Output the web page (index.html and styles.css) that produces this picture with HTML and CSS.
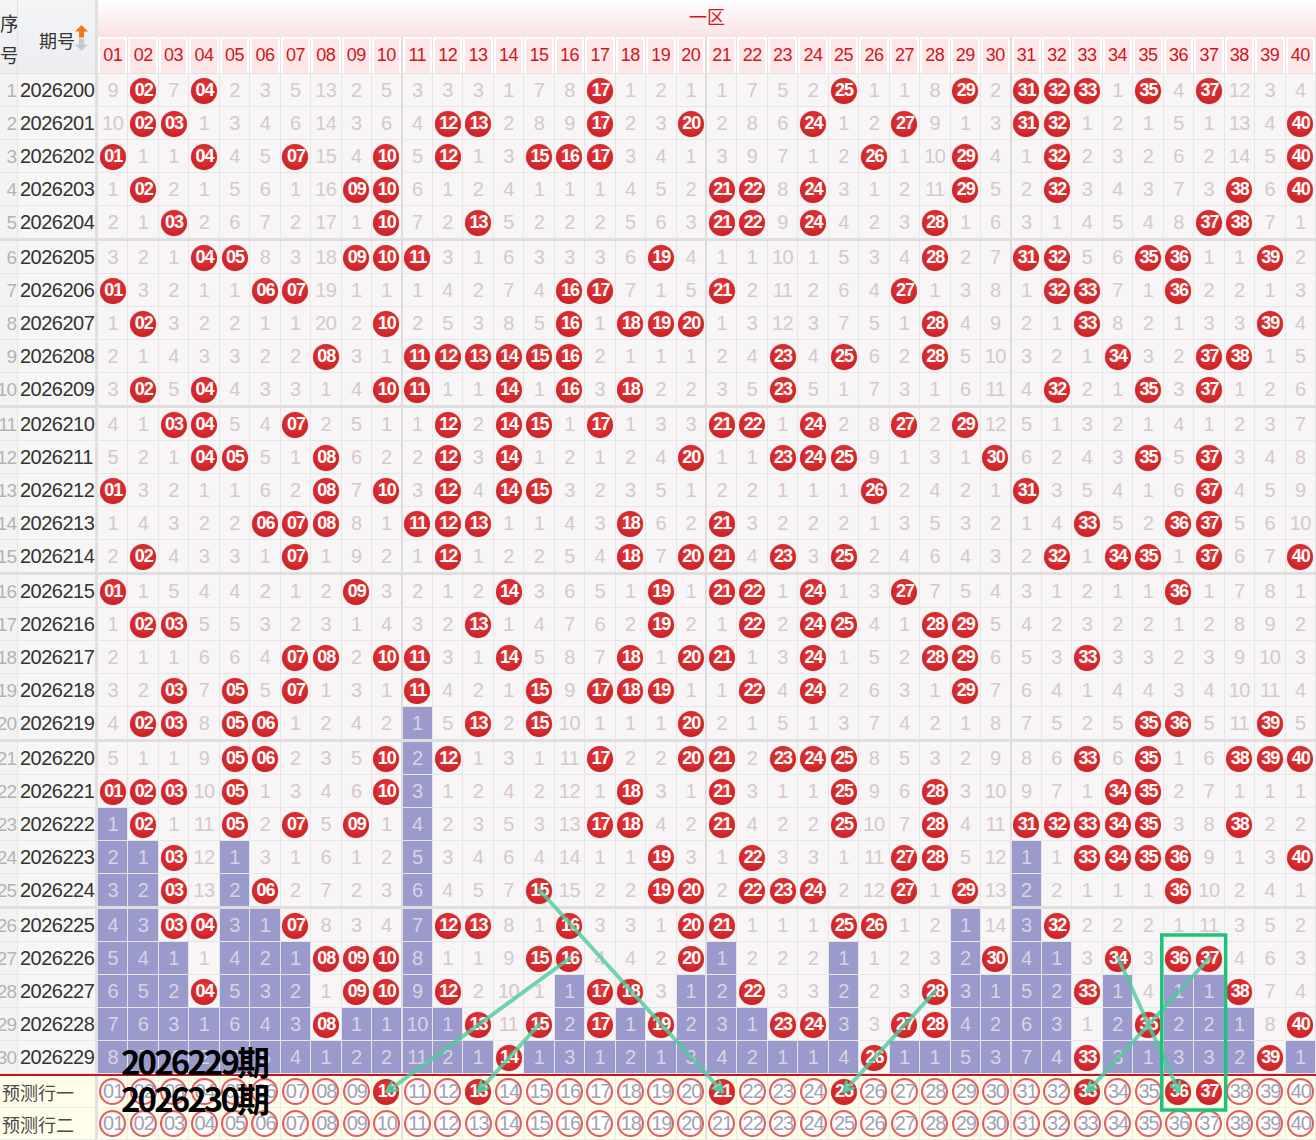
FILE: index.html
```html
<!DOCTYPE html>
<html lang="zh-CN">
<head>
<meta charset="utf-8">
<title>一区走势图</title>
<link rel="stylesheet" href="styles.css">
</head>
<body>
<div class="chart" id="chart">
  <div class="head" id="head">
    <div class="h-xh"><span>序</span><span>号</span></div>
    <div class="h-qh"><span class="qh-t">期号</span>
      <svg class="sort" width="13" height="26" viewBox="0 0 13 26"><path d="M6.5 0 L13 6.5 L9 6.5 L9 12.5 L4 12.5 L4 6.5 L0 6.5Z" fill="#f07818"/><path d="M4 13.5 L9 13.5 L9 19.5 L13 19.5 L6.5 26 L0 19.5 L4 19.5Z" fill="#c9c9c9"/></svg>
    </div>
    <div class="h-zone">一区</div>
  </div>
  <div class="body" id="body"></div>
  <div class="redline"></div>
  <div class="pred" id="pred"></div>
  <svg class="overlay" id="overlay" width="1316" height="1140" viewBox="0 0 1316 1140">
    <defs>
      <marker id="ah" viewBox="0 0 10 10" refX="8.5" refY="5" markerWidth="3" markerHeight="3" orient="auto">
        <path d="M1 1 L9 5 L1 9" fill="none" stroke="#4fcb9c" stroke-width="2.2" stroke-linecap="round"/>
      </marker>
    </defs>
    <g id="lines"></g>
  </svg>
  <div class="stamp s1">2026229期</div>
  <div class="stamp s2">2026230期</div>
</div>
<script src="app.js"></script>
</body>
</html>
```
FILE: styles.css
```css
* { box-sizing: border-box; margin: 0; padding: 0; }
html, body { background: #fff; }
body {
  width: 1316px;
  height: 1140px;
  overflow: hidden;
  font-family: "Liberation Sans", "Noto Sans CJK SC", sans-serif;
}
.chart { position: relative; width: 1316px; height: 1140px; }

/* header */
.head {
  display: grid;
  grid-template-columns: 18px 80px repeat(40, 1fr);
  grid-template-rows: 37px 37px;
}
.h-xh {
  grid-row: 1 / 3;
  grid-column: 1;
  display: flex;
  flex-direction: column;
  align-items: flex-end;
  overflow: hidden;
  padding-top: 7px;
  font-family: "Noto Sans CJK SC", sans-serif;
  font-size: 19px;
  line-height: 32px;
  color: #333;
  background: linear-gradient(#f3f4f6, #eceef1);
  border-right: 1px solid #e2e2e2;
  border-bottom: 1px solid #e2e2e2;
}
.h-xh span { margin-right: -2px; }
.h-qh {
  grid-row: 1 / 3;
  grid-column: 2;
  display: flex;
  align-items: center;
  padding-left: 21px;
  padding-top: 6px;
  background: linear-gradient(#f3f4f6, #eceef1);
  border-right: 3px solid #e0e0e0;
  border-bottom: 1px solid #e2e2e2;
}
.qh-t {
  font-family: "Noto Sans CJK SC", sans-serif;
  font-size: 18px;
  color: #333;
}
.sort { margin-left: 0; margin-top: -4px; }
.h-zone {
  grid-row: 1;
  grid-column: 3 / -1;
  display: flex;
  align-items: center;
  justify-content: center;
  padding-bottom: 6px;
  background: linear-gradient(#ffffff, #fbe2e3);
  color: #d4161c;
  font-family: "Noto Sans CJK SC", sans-serif;
  font-size: 18px;
}
.hn {
  grid-row: 2;
  display: flex;
  align-items: center;
  justify-content: center;
  background: #fde7e8;
  box-shadow: inset 2px 0 #fff, inset -2px 0 #fff, inset 0 2px #fff;
  border-right: 1px solid #e6e6e6;
  border-bottom: 1px solid #e2e2e2;
  color: #d0161b;
  font-size: 18px;
  letter-spacing: -0.5px;
}
.hn.t { border-right: 2px solid #dedcdd; }

/* body rows */
.row {
  display: grid;
  grid-template-columns: 18px 80px repeat(40, 1fr);
  height: 33px;
  border-bottom: 1px solid #e7e5e6;
}
.row.sep { height: 35px; border-bottom: 3px solid #e0dedf; }
.c {
  display: flex;
  align-items: center;
  justify-content: center;
  padding-top: 1px;
  border-right: 1px solid #e7e5e6;
  background: #f7f5f6;
  color: #d6c9ca;
  font-size: 20px;
  letter-spacing: -0.5px;
}
.c.t { border-right: 2px solid #dedcdd; }
.c.p { background: #9a9acc; color: #d9d3e3; }
.xh {
  justify-content: flex-end;
  overflow: hidden;
  padding-right: 1px;
  background: #f3f3f3;
  color: #b3b3b3;
  font-size: 19px;
  letter-spacing: -1px;
}
.qh {
  justify-content: flex-start;
  padding-left: 2px;
  background: #f6f6f6;
  color: #333;
  font-size: 20px;
  border-right: 3px solid #e0e0e0;
}
.b {
  width: 26px;
  height: 26px;
  border-radius: 50%;
  display: flex;
  align-items: center;
  justify-content: center;
  padding-left: 1px;
  background: radial-gradient(circle at 50% 42%, #e63c3e 0%, #d72a2d 50%, #b8191d 100%);
  box-shadow: 0 0 1px rgba(120, 0, 0, 0.5);
  color: #fff;
  font-weight: bold;
  font-size: 18px;
  letter-spacing: -1px;
}

.redline { height: 2px; background: #c8161d; }

/* prediction rows */
.prow {
  display: grid;
  grid-template-columns: 18px 80px repeat(40, 1fr);
  height: 32px;
  border-bottom: 1px solid #ececec;
  background: #fffee9;
}
.pl {
  grid-column: 1 / 3;
  display: flex;
  align-items: center;
  padding-left: 2px;
  font-family: "Noto Sans CJK SC", sans-serif;
  font-size: 18px;
  color: #4a4a4a;
  border-right: 3px solid #e0e0e0;
}
.pcell {
  display: flex;
  align-items: center;
  justify-content: center;
  border-right: 1px solid #ebebeb;
}
.pcell.t { border-right: 2px solid #e2e2e2; }
.pc {
  width: 27px;
  height: 27px;
  border-radius: 50%;
  display: flex;
  align-items: center;
  justify-content: center;
  border: 2px solid #e15d5f;
  background: #fff;
  box-shadow: inset 0 0 2px #f2a9aa;
  color: #a2a3ae;
  font-size: 20px;
  letter-spacing: -1px;
  padding-left: 1px;
}

/* overlays */
.overlay {
  position: absolute;
  left: 0;
  top: 0;
  z-index: 2;
  pointer-events: none;
}
.stamp {
  position: absolute;
  left: 121px;
  z-index: 3;
  font-family: "Noto Sans CJK SC", sans-serif;
  font-weight: 700;
  font-size: 33px;
  line-height: 33px;
  letter-spacing: -2.9px;
  color: #000;
}
.s1 { top: 1045px; }
.s2 { top: 1082px; }
```
FILE: app.js
```js
(function () {
  var Q0 = 2026200;
  var H = [
    [2,4,17,25,29,31,32,33,35,37],
    [2,3,12,13,17,20,24,27,31,32,40],
    [1,4,7,10,12,15,16,17,26,29,32,40],
    [2,9,10,21,22,24,29,32,38,40],
    [3,10,13,21,22,24,28,37,38],
    [4,5,9,10,11,19,28,31,32,35,36,39],
    [1,6,7,16,17,21,27,32,33,36],
    [2,10,16,18,19,20,28,33,39],
    [8,11,12,13,14,15,16,23,25,28,34,37,38],
    [2,4,10,11,14,16,18,23,32,35,37],
    [3,4,7,12,14,15,17,21,22,24,27,29],
    [4,5,8,12,14,20,23,24,25,30,35,37],
    [1,8,10,12,14,15,26,31,37],
    [6,7,8,11,12,13,18,21,33,36,37],
    [2,7,12,18,20,21,23,25,32,34,35,37,40],
    [1,9,14,19,21,22,24,27,36],
    [2,3,13,19,22,24,25,28,29],
    [7,8,10,11,14,18,20,21,24,28,29,33],
    [3,5,7,11,15,17,18,19,22,24,29],
    [2,3,5,6,13,15,20,35,36,39],
    [5,6,10,12,17,20,21,23,24,25,33,35,38,39,40],
    [1,2,3,5,10,18,21,25,28,34,35],
    [2,5,7,9,17,18,21,25,28,31,32,33,34,35,38],
    [3,19,22,27,28,33,34,35,36,40],
    [3,6,15,19,20,22,23,24,27,29,36],
    [3,4,7,12,13,16,20,21,25,26,32],
    [8,9,10,15,16,20,30,34,36,37],
    [4,9,10,12,17,18,22,28,33,38],
    [8,13,15,17,19,23,24,27,28,35,40],
    [14,26,33,39]
  ];
  var INIT = [9,0,7,0,2,3,5,13,2,5,3,3,3,1,7,8,0,1,2,1,1,7,5,2,0,1,1,8,0,2,0,0,0,1,0,4,0,12,3,4];
  var PRED1 = [10,13,21,25,33,36,37];
  var LINES = [[27,16,10],[29,15,13],[25,15,21],[28,28,25],[27,34,36],[27,37,33]];

  function pad(n) { return (n < 10 ? '0' : '') + n; }
  function mk(tag, cls, txt) {
    var e = document.createElement(tag);
    e.className = cls;
    if (txt !== undefined && txt !== '') e.textContent = txt;
    return e;
  }

  /* header numbers */
  var head = document.getElementById('head');
  for (var c = 1; c <= 40; c++) {
    head.appendChild(mk('div', 'hn' + (c % 10 === 0 && c < 40 ? ' t' : ''), pad(c)));
  }

  /* body */
  var body = document.getElementById('body');
  var last = [];
  for (c = 0; c <= 40; c++) last[c] = -1;
  H.forEach(function (h, i) { h.forEach(function (n) { last[n] = i; }); });
  var om = INIT.slice();
  var cells = [];
  H.forEach(function (h, i) {
    var row = mk('div', 'row' + ((i + 1) % 5 === 0 && i < H.length - 1 ? ' sep' : ''));
    row.appendChild(mk('div', 'c xh', String(i + 1)));
    row.appendChild(mk('div', 'c qh', String(Q0 + i)));
    var rc = [];
    for (var c = 1; c <= 40; c++) {
      var hit = h.indexOf(c) >= 0;
      if (i > 0) om[c - 1] = hit ? 0 : om[c - 1] + 1;
      var cls = 'c n';
      if (c % 10 === 0 && c < 40) cls += ' t';
      if (i > last[c]) cls += ' p';
      var el = mk('div', cls);
      if (hit) el.appendChild(mk('span', 'b', pad(c)));
      else el.textContent = String(om[c - 1]);
      row.appendChild(el);
      rc[c] = el;
    }
    cells.push(rc);
    body.appendChild(row);
  });

  /* prediction rows */
  var pred = document.getElementById('pred');
  var predCells = [];
  ['预测行一', '预测行二'].forEach(function (lab, k) {
    var row = mk('div', 'prow');
    row.appendChild(mk('div', 'pl', lab));
    var rc = [];
    for (var c = 1; c <= 40; c++) {
      var cell = mk('div', 'pcell' + (c % 10 === 0 && c < 40 ? ' t' : ''));
      var filled = k === 0 && PRED1.indexOf(c) >= 0;
      cell.appendChild(mk('span', filled ? 'b' : 'pc', pad(c)));
      row.appendChild(cell);
      rc[c] = cell;
    }
    predCells.push(rc);
    pred.appendChild(row);
  });

  /* overlay lines */
  var NS = 'http://www.w3.org/2000/svg';
  var chart = document.getElementById('chart').getBoundingClientRect();
  var g = document.getElementById('lines');
  function ctr(el) {
    var r = el.getBoundingClientRect();
    return [r.left + r.width / 2 - chart.left, r.top + r.height / 2 - chart.top];
  }
  LINES.forEach(function (L) {
    var a = ctr(cells[L[0] - 1][L[1]]);
    var b = ctr(predCells[0][L[2]]);
    var ln = document.createElementNS(NS, 'line');
    ln.setAttribute('x1', a[0]); ln.setAttribute('y1', a[1]);
    ln.setAttribute('x2', b[0]); ln.setAttribute('y2', b[1]);
    ln.setAttribute('stroke', '#4fcb9c');
    ln.setAttribute('stroke-opacity', '0.8');
    ln.setAttribute('stroke-width', '4');
    ln.setAttribute('stroke-linecap', 'round');
    ln.setAttribute('marker-end', 'url(#ah)');
    g.appendChild(ln);
  });

  /* highlight rectangle around 36-37 */
  var r1 = cells[26][36].getBoundingClientRect();
  var r2 = predCells[0][37].getBoundingClientRect();
  var x = r1.left - chart.left - 2;
  var y = r1.top - chart.top - 7;
  var w = r2.right - r1.left + 3;
  var hgt = r2.bottom - r1.top + 10;
  var rect = document.createElementNS(NS, 'rect');
  rect.setAttribute('x', x); rect.setAttribute('y', y);
  rect.setAttribute('width', w); rect.setAttribute('height', hgt);
  rect.setAttribute('fill', 'none');
  rect.setAttribute('stroke', '#1fc27a');
  rect.setAttribute('stroke-width', '3.5');
  g.appendChild(rect);
})();
```
